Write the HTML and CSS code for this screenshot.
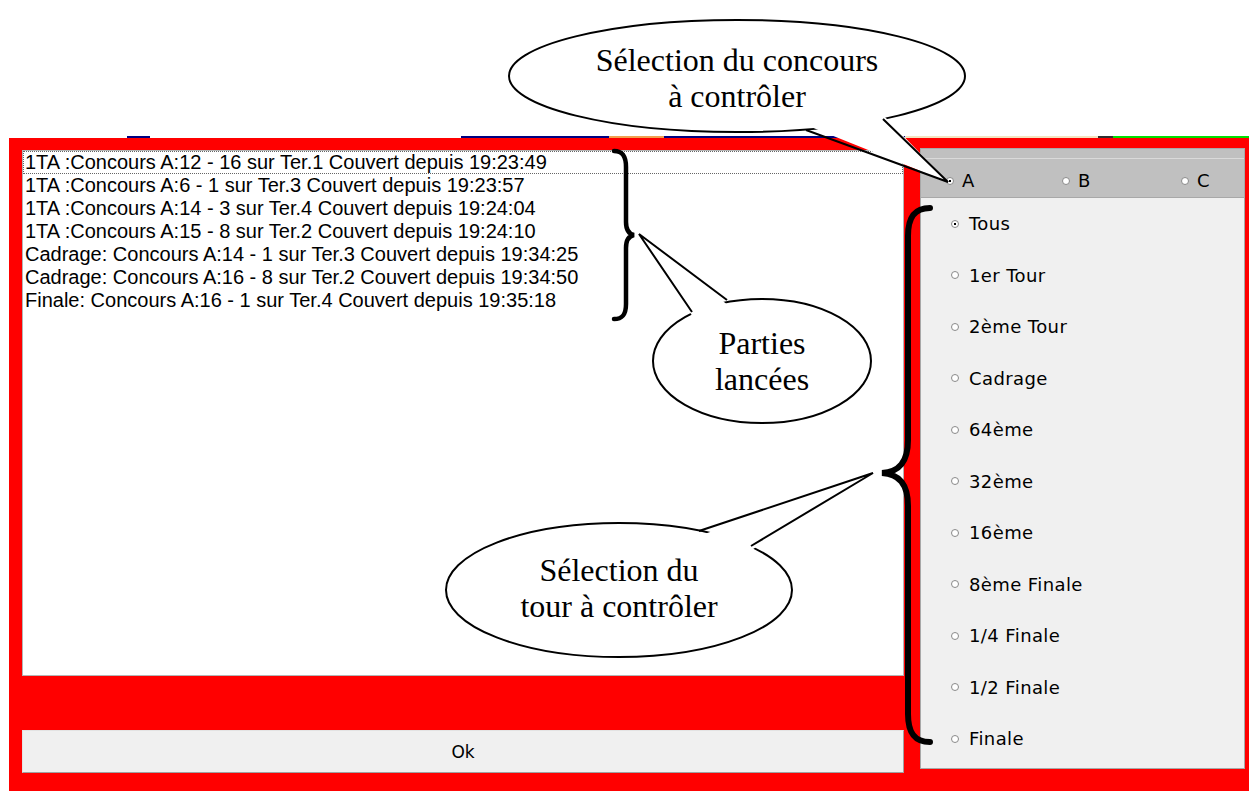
FILE: index.html
```html
<!DOCTYPE html>
<html lang="fr">
<head>
  <meta charset="UTF-8" />
  <title>Contrôle des parties</title>
  <link rel="stylesheet" href="styles.css">
</head>
<body>
  <div class="screen">
    <div class="top-gap"></div>
    <div class="clip-strip"></div>

    <div class="window">
      <div class="left-col">
        <ul class="listbox">
          <li class="item focus">1TA :Concours A:12 - 16 sur Ter.1 Couvert depuis 19:23:49</li>
          <li class="item">1TA :Concours A:6 - 1 sur Ter.3 Couvert depuis 19:23:57</li>
          <li class="item">1TA :Concours A:14 - 3 sur Ter.4 Couvert depuis 19:24:04</li>
          <li class="item">1TA :Concours A:15 - 8 sur Ter.2 Couvert depuis 19:24:10</li>
          <li class="item">Cadrage: Concours A:14 - 1 sur Ter.3 Couvert depuis 19:34:25</li>
          <li class="item">Cadrage: Concours A:16 - 8 sur Ter.2 Couvert depuis 19:34:50</li>
          <li class="item">Finale: Concours A:16 - 1 sur Ter.4 Couvert depuis 19:35:18</li>
        </ul>
        <button class="ok-btn">Ok</button>
      </div>

      <div class="side-panel">
        <div class="contest-bar">
          <div class="contest-row">
            <label class="opt"><span class="radio checked"></span>A</label>
            <label class="opt"><span class="radio"></span>B</label>
            <label class="opt"><span class="radio"></span>C</label>
          </div>
        </div>
        <div class="round-list">
          <label class="opt round"><span class="radio checked"></span>Tous</label>
          <label class="opt round"><span class="radio"></span>1er Tour</label>
          <label class="opt round"><span class="radio"></span>2ème Tour</label>
          <label class="opt round"><span class="radio"></span>Cadrage</label>
          <label class="opt round"><span class="radio"></span>64ème</label>
          <label class="opt round"><span class="radio"></span>32ème</label>
          <label class="opt round"><span class="radio"></span>16ème</label>
          <label class="opt round"><span class="radio"></span>8ème Finale</label>
          <label class="opt round"><span class="radio"></span>1/4 Finale</label>
          <label class="opt round"><span class="radio"></span>1/2 Finale</label>
          <label class="opt round"><span class="radio"></span>Finale</label>
        </div>
      </div>
    </div>

    <!-- annotations drawn over the screenshot -->
    <svg class="notes" width="1249" height="791" viewBox="0 0 1249 791">
      <g fill="#fff" stroke="#000" stroke-width="2">
        <ellipse cx="737" cy="76" rx="228" ry="56"/>
        <ellipse cx="762" cy="361" rx="109" ry="62"/>
        <ellipse cx="619" cy="590" rx="173" ry="67"/>
      </g>
      <g fill="#fff" stroke="none">
        <polygon points="806,125 882,114 948,182"/>
        <polygon points="693,317 729,306 639,234"/>
        <polygon points="699,536 750,551 873,473"/>
      </g>
      <g fill="none" stroke="#000" stroke-width="2" stroke-linejoin="miter">
        <polyline points="806,130 948,182 883,119"/>
        <polyline points="692,312 639,234 727,300"/>
        <polyline points="699,531 873,473 751,546"/>
      </g>
      <g fill="none" stroke="#000" stroke-linecap="round">
        <path stroke-width="4.5" d="M614,151 C623,151 626,157 626,167 L626,222 C626,230 629,234 634,235 C629,236 626,240 626,248 L626,304 C626,314 623,319 614,319"/>
        <path stroke-width="6" d="M930,208 C914,208 908,218 908,236 L908,440 C908,462 899,472 882,473 C899,474 908,484 908,506 L908,714 C908,732 914,742 930,742"/>
      </g>
    </svg>
    <div class="note note-contest">Sélection du concours<br>à contrôler</div>
    <div class="note note-games">Parties<br>lancées</div>
    <div class="note note-round">Sélection du<br>tour à contrôler</div>
  </div>
</body>
</html>
```

FILE: styles.css
```css
body {
  margin: 0;
  background: #fff;
  font-family: 'Liberation Sans', Arial, sans-serif;
}
.screen {
  position: relative;
  width: 1249px;
  height: 791px;
  overflow: hidden;
}
.top-gap {
  height: 134px;
}
/* cropped remains of the title bar */
.clip-strip {
  height: 4px;
  background: linear-gradient(to right,
    #fff 0, #fff 127px, #000080 127px, #000080 150px, #fff 150px,
    #fff 461px, #000080 461px, #000080 609px, #f0a050 609px, #f0a050 664px,
    #000080 664px, #000080 905px, #f3e2c0 905px, #f3e2c0 1098px,
    #303030 1098px, #303030 1113px, #00e000 1113px);
  background-size: 100% 2px;
  background-repeat: no-repeat;
  background-position: 0 2px;
}
.window {
  margin-left: 9px;
  height: 653px;
  box-sizing: border-box;
  background: #ff0000;
  padding: 10px 4px 0 13px;
  display: flex;
  gap: 16px;
}
.left-col {
  width: 882px;
  display: flex;
  flex-direction: column;
}
.listbox {
  list-style: none;
  margin: 2px 0 0;
  padding: 0;
  height: 526px;
  box-sizing: border-box;
  background: #fff;
  border: 1px solid #b4b4b4;
}
.item {
  font-size: 20px;
  line-height: 23px;
  padding-left: 2px;
  color: #000;
  white-space: nowrap;
}
.item.focus {
  outline: 1px dotted #666;
  outline-offset: -1px;
}
.ok-btn {
  margin-top: 54px;
  height: 43px;
  background: #f0f0f0;
  border: 1px solid;
  border-color: #e3e3e3 #a0a0a0 #a0a0a0 #e3e3e3;
  font-family: 'DejaVu Sans', sans-serif;
  font-size: 17px;
  color: #000;
  padding: 0;
}
.side-panel {
  width: 325px;
  height: 621px;
  box-sizing: border-box;
  background: #f0f0f0;
  border: 1px solid #a8a8a8;
}
.contest-bar {
  height: 49px;
  box-sizing: border-box;
  background: #c0c0c0;
  padding-top: 9px;
  border-bottom: 1px solid #a8a8a8;
}
.contest-row {
  height: 38px;
  border-top: 1px solid #dadada;
  display: grid;
  grid-template-columns: 116px 119px auto;
  align-items: center;
  padding: 6px 0 0 25px;
  box-sizing: border-box;
}
.opt {
  display: flex;
  align-items: center;
  gap: 8px;
  font-family: 'DejaVu Sans', sans-serif;
  font-size: 18px;
  letter-spacing: 0.4px;
  color: #000;
}
.round-list {
  padding-left: 30px;
}
.opt.round {
  height: 51.5px;
  gap: 10px;
}
.radio {
  position: relative;
  width: 8px;
  height: 8px;
  box-sizing: border-box;
  border-radius: 50%;
  background: #fff;
  border: 1px solid #8a8a8a;
  flex: none;
}
.radio.checked::after {
  content: "";
  position: absolute;
  left: 2px;
  top: 2px;
  width: 2px;
  height: 2px;
  background: #000;
}
.notes {
  position: absolute;
  left: 0;
  top: 0;
}
.note {
  position: absolute;
  font-family: 'Liberation Serif', 'Times New Roman', serif;
  font-size: 32px;
  line-height: 36px;
  text-align: center;
  color: #000;
}
.note-contest {
  left: 537px;
  width: 400px;
  top: 42px;
}
.note-games {
  left: 662px;
  width: 200px;
  top: 325px;
}
.note-round {
  left: 469px;
  width: 300px;
  top: 552px;
}
```
